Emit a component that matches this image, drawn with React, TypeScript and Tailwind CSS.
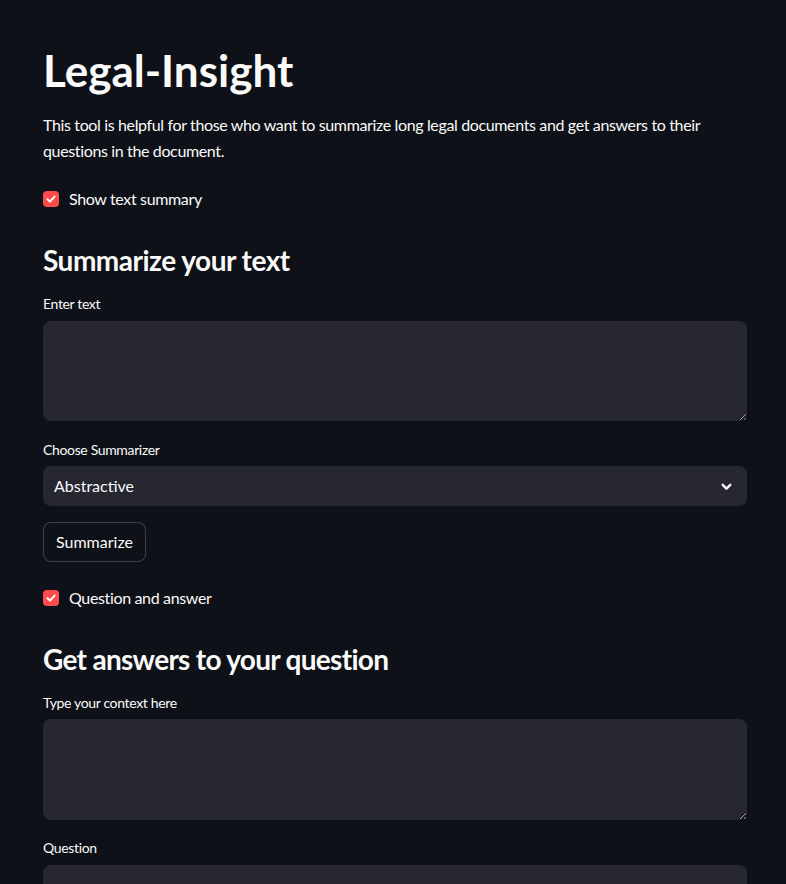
import React from "react";

function Check({ label }: { label: string }) {
  return (
    <label className="flex items-center gap-[10px] h-6 cursor-pointer">
      <span className="w-4 h-4 rounded-[4px] bg-[#ff4b4b] flex items-center justify-center">
        <svg width="12" height="12" viewBox="0 0 12 12" fill="none">
          <path d="M2.5 6.2 L5 8.6 L9.6 3.6" stroke="white" strokeWidth="2" strokeLinecap="round" strokeLinejoin="round" />
        </svg>
      </span>
      <span className="text-[16px] leading-6 text-[#fafafa] tracking-[-0.35px]">{label}</span>
    </label>
  );
}

function Label({ children }: { children: React.ReactNode }) {
  return <div className="text-[14px] leading-[22px] text-[#fafafa] tracking-[-0.35px]">{children}</div>;
}

export default function App() {
  return (
    <div
      className="min-h-[884px] bg-[#0e1117] text-[#fafafa] overflow-hidden [color-scheme:dark]"
      style={{ fontFamily: '"Lato", "Noto Sans", sans-serif' }}
    >
      <div className="w-[704px] ml-[43px] pt-[44px] flex flex-col">
        <h1 className="text-[44px] font-bold leading-[53px]">Legal-Insight</h1>
        <p className="mt-[15px] text-[16px] leading-[25.6px] tracking-[-0.36px]">
          This tool is helpful for those who want to summarize long legal documents and get answers to their
          questions in the document.
        </p>
        <div className="mt-[24px]">
          <Check label="Show text summary" />
        </div>
        <h3 className="mt-[32px] text-[28px] font-bold leading-[34px] tracking-[-0.5px]">Summarize your text</h3>
        <div className="mt-[16px]">
          <Label>Enter text</Label>
        </div>
        <textarea className="mt-[6px] h-[100px] w-full rounded-[8px] bg-[#262730] outline-none resize-y px-3 py-2" />
        <div className="mt-[18px]">
          <Label>Choose Summarizer</Label>
        </div>
        <div className="mt-[5px] h-[40px] w-full rounded-[8px] bg-[#262730] flex items-center justify-between pl-[11px] pr-[14px]">
          <span className="text-[16px]">Abstractive</span>
          <svg width="13" height="13" viewBox="0 0 12 12" fill="none">
            <path d="M2.5 4.5 L6 8 L9.5 4.5" stroke="#fafafa" strokeWidth="2.2" strokeLinecap="round" strokeLinejoin="round" />
          </svg>
        </div>
        <div className="mt-[16px]">
          <button className="h-[40px] px-[12px] rounded-[8px] border border-[#fafafa33] text-[16px] bg-[#0e1117]">
            Summarize
          </button>
        </div>
        <div className="mt-[24px]">
          <Check label="Question and answer" />
        </div>
        <h3 className="mt-[32px] text-[28px] font-bold leading-[34px] tracking-[-0.7px]">Get answers to your question</h3>
        <div className="mt-[16px]">
          <Label>Type your context here</Label>
        </div>
        <textarea className="mt-[5px] h-[101px] w-full rounded-[8px] bg-[#262730] outline-none resize-y px-3 py-2" />
        <div className="mt-[17px]">
          <Label>Question</Label>
        </div>
        <div className="mt-[6px] h-[40px] w-full rounded-[8px] bg-[#262730]" />
      </div>
    </div>
  );
}
